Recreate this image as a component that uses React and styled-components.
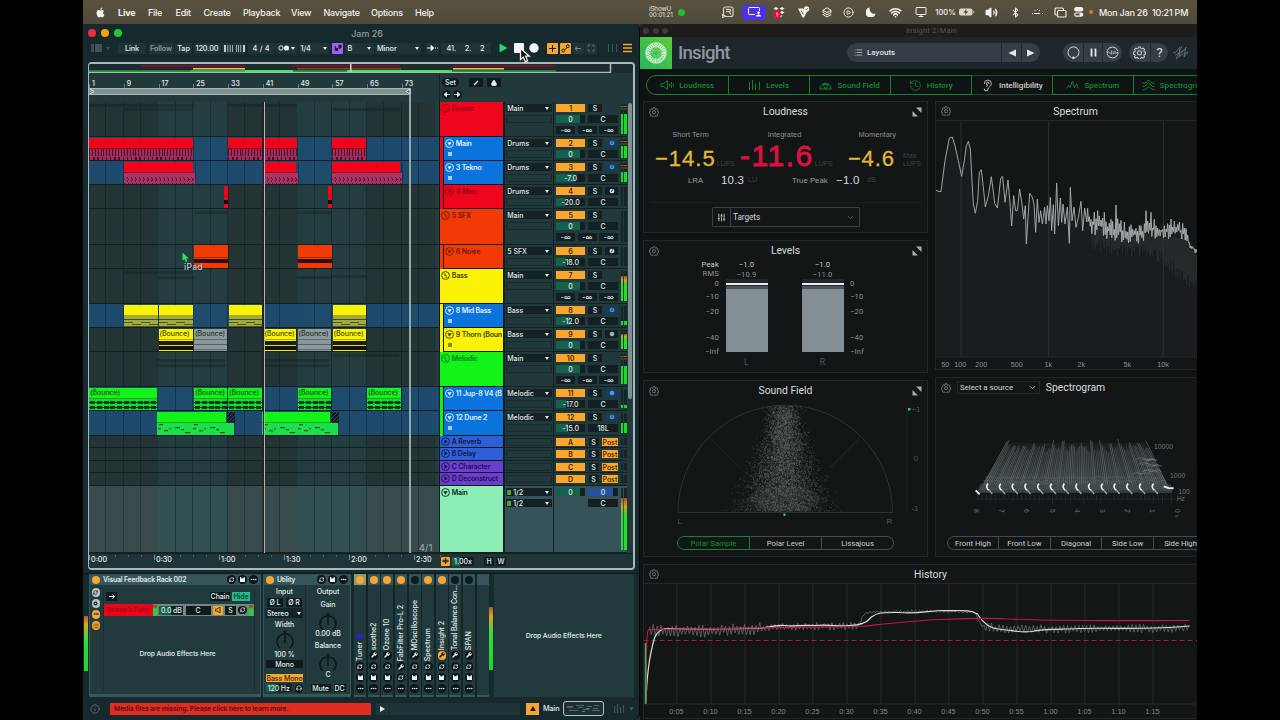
import React from "react";
import styled, { createGlobalStyle, css } from "styled-components";
import {
  Layers, CirclePlay, Wifi, Monitor, Volume2, Bluetooth, Copy, Ear,
  History as HistoryIcon, SlidersVertical, ChevronDown, List, Info, Lock,
  RefreshCw, Wrench, Scan, Ellipsis, Headphones,
} from "lucide-react";

const GlobalStyle = createGlobalStyle`
  * { box-sizing: border-box; }
  html, body { margin: 0; background: #000; overflow: hidden; }
  body { font-family: Inter, "Liberation Sans", sans-serif; width: 1280px; height: 720px; }
  svg { display: block; flex: none; }
`;

/* ---------- helpers ---------- */
const makeRandom = (seed) => {
  let s = seed;
  return () => {
    s = (s * 1664525 + 1013904223) % 4294967296;
    return s / 4294967296;
  };
};
const BAR = 34.75 / 8;

/* ---------- desktop ---------- */
const Desktop = styled.div`
  width: 1114px; height: 720px; margin-left: 83px; overflow: hidden;
  display: flex; flex-direction: column; background: #2b2b22;
`;
const MenuBar = styled.header`
  height: 24px; flex: none; display: flex; align-items: center; white-space: nowrap;
  background: linear-gradient(#58523f, #4f4b3a); color: #f4f2ea; padding-left: 12px;
`;
const MenuItem = styled.span`
  width: ${(p) => p.$w}px; margin-right: 13px; font-size: 9px; letter-spacing: ${(p) => (p.$bold ? "-.15px" : "-.25px")};
  font-weight: ${(p) => (p.$bold ? 700 : 500)};
`;
const AppleSlot = styled.span`width: 23px; display: flex;`;
const Recorder = styled.div`
  margin-left: 202px; width: 28px; font-size: 6.3px; line-height: 6px; letter-spacing: -.1px; color: #e6e3d8;
`;
const GreenDot = styled.i`width: 7px; height: 7px; border-radius: 50%; background: #1fbf2d; margin: 0 30px 0 1px;`;
const StatusSlot = styled.span`
  width: ${(p) => p.$w}px; display: flex; justify-content: center; align-items: center; font-size: 7.6px; font-weight: 500;
`;
const ShareBadge = styled.span`
  width: 24px; height: 15px; border-radius: 3px; background: #4b32e6; display: flex; align-items: center; justify-content: center;
`;
const ClockText = styled.span`margin-left: 6px; font-size: 9px; font-weight: 500; letter-spacing: -.22px;`;
const OrangeDot = styled.i`width: 4px; height: 4px; border-radius: 50%; background: #e07a1e; margin-left: 1px;`;
const Windows = styled.div`display: flex; height: 696px;`;

/* ---------- Live window ---------- */
const LiveWindow = styled.section`
  width: 557px; height: 696px; position: relative; background: #16292c; color: #e2ebea;
  border-radius: 6px 6px 7px 7px; border-right: 1px solid #06090a; font-weight: 500;
`;
const LiveTitle = styled.div`
  height: 17px; display: grid; grid-template-columns: 1fr auto 1fr; align-items: center; padding: 1px 0 0 5px;
  font-size: 8.9px; color: #93a0a0;
`;
const TitleText = styled.span`padding-left: ${(p) => p.$pl}px;`;
const Lights = styled.div`display: flex; gap: ${(p) => p.$gap}px;`;
const Light = styled.i`width: ${(p) => p.$s}px; height: ${(p) => p.$s}px; border-radius: 50%; background: ${(p) => p.$c};`;
const LiveToolbar = styled.div`height: 14px; display: flex; align-items: center; padding-left: 7px;`;
const ToolCell = styled.div`
  width: ${(p) => p.$w}px; height: 11px; margin-left: ${(p) => p.$ml || 1.5}px; padding: 0 ${(p) => p.$pad || 0}px;
  display: flex; align-items: center; justify-content: ${(p) => (p.$spread ? "space-between" : "center")};
  background: ${(p) => p.$bg || "#1f3438"}; color: ${(p) => p.$c || "#e4eceb"};
  font-size: 7.3px; letter-spacing: -.1px; border-radius: 1px; white-space: nowrap;
`;
const Transport = styled.span`margin-left: 6px;`;
const Caret = styled.i`
  width: 0; height: 0; border: 2px solid transparent; border-top: 3px solid currentColor; border-bottom: 0;
`;
const Frame = styled.div`
  margin: 7px 0 0 5px; width: 547px; height: 508px; border: 2px solid #a9b8ba; border-left-width: 1px;
  border-radius: 4px; overflow: hidden; background: #22393c; display: flex; flex-direction: column;
`;
const Overview = styled.div`height: 9px; flex: none; background: #1c2c2e;`;
const RulerRow = styled.div`height: 29px; flex: none; display: flex;`;
const Ruler = styled.div`width: 351px; display: flex; flex-direction: column; border-right: 1px solid #152527;`;
const RulerNumbers = styled.div`height: 15px; display: flex; padding-top: 6px;`;
const RulerNumber = styled.span`
  width: ${BAR * 8}px; flex: none; height: 9px; padding-left: 3px; font-size: 7px; line-height: 9px;
  background: linear-gradient(#6b7f80, #6b7f80) 0 100% / 1px 4px no-repeat;
`;
const LoopBrace = styled.div`
  width: 322px; height: 7px; background: #7f9391; display: flex; justify-content: space-between;
  border: 1px solid #a9b8b6; border-width: 1px 0;
`;
const RulerTools = styled.div`padding: 5px 0 0 2px; display: flex; flex-direction: column; gap: 3px;`;
const ToolLine = styled.div`display: flex; gap: ${(p) => p.$gap}px; align-items: center;`;
const RulerBtn = styled.span`
  width: ${(p) => p.$w}px; height: 9px; margin-right: ${(p) => p.$mr || 0}px; border-radius: ${(p) => (p.$round ? 5 : 1)}px;
  background: ${(p) => p.$bg || "#0f1c1f"}; display: flex; align-items: center; justify-content: center; font-size: 7px;
`;
const TrackArea = styled.div`height: 451px; flex: none; position: relative; display: flex;`;
const TrackList = styled.div`display: flex; flex-direction: column; width: 538px;`;
const TrackRow = styled.div`display: flex; height: ${(p) => p.$h}px; flex: none; background: ${(p) => (p.$main ? "#37535a" : "#22393c")};`;
const laneColor = { normal: "#233435", active: "#1e4a6d", main: "#374b4c" };
const Lane = styled.div`
  width: 351px; position: relative; border-bottom: 1px solid #142123;
  background:
    repeating-linear-gradient(90deg, transparent 0 16.4px, rgba(8,20,24,.38) 16.4px 17.375px),
    repeating-linear-gradient(90deg, transparent 0 69.5px, rgba(36,90,96,${(p) => (p.$kind === "active" ? 0.1 : 0.25)}) 69.5px 139px),
    ${(p) => laneColor[p.$kind]};
`;
const Ghost = styled.i`position: absolute; height: 3px; top: ${(p) => p.$y}px; background: rgba(12,26,28,.3);`;
const Head = styled.div`width: 65px; padding-left: 1px; display: flex; background: #10191b;`;
const Stripe = styled.i`width: 3px; background: ${(p) => p.$c}; margin-right: 1px;`;
const HeadBody = styled.div`
  flex: 1; margin: 0 1px 1px 0; min-width: 0; background: ${(p) => p.$c}; color: ${(p) => p.$fg}; padding: 1px 0 0 .5px;
  overflow: hidden;
`;
const HeadTitle = styled.div`
  display: flex; align-items: center; gap: 2px; font-size: 7px; line-height: 9px; height: ${(p) => (p.$small ? 9 : 10)}px;
  font-weight: 600; white-space: nowrap; letter-spacing: -.18px;
`;
const HeadMark = styled.i`display: block; width: 4px; height: 4px; margin: 4px 0 0 3px; background: ${(p) => p.$c};`;
const IOCol = styled.div`
  width: 50px; border-left: 1px solid #142123; border-right: 1px solid #142123; border-bottom: 1px solid #142123;
  padding: 2px 1px 0; display: flex; flex-direction: column; gap: 3px;
`;
const IOSelect = styled.div`
  height: 8px; background: #132225; display: flex; align-items: center; justify-content: space-between;
  padding: 0 3px 0 1px; font-size: 7px; white-space: nowrap;
`;
const IOName = styled.span`display: flex; align-items: center; gap: 2px;`;
const IOLevel = styled.i`width: 4px; height: 5px; background: linear-gradient(90deg, #3a9d3c, #7c9b3c);`;
const IOEmpty = styled.div`height: 8px; border: 1px solid #182b2e; background: #21383b;`;
const MixCol = styled.div`
  width: 65px; padding: 2px 0 0 2px; display: flex; flex-direction: column; gap: 3px; border-bottom: 1px solid #142123;
`;
const MixLine = styled.div`display: flex; gap: ${(p) => p.$gap || 3}px; height: 8px; justify-content: ${(p) => (p.$end ? "flex-end" : "flex-start")}; width: 62px;`;
const MixCell = styled.div`
  width: ${(p) => p.$w}px; height: 8px; display: flex; align-items: center; justify-content: center;
  background: ${(p) => p.$bg || "#122023"}; color: ${(p) => p.$c || "#e2ebea"}; font-size: 7px; font-weight: ${(p) => (p.$b ? 600 : 500)};
`;
const MeterCol = styled.div`width: 8px; display: flex; gap: 1px; padding: 2px 0 2px 2px; border-bottom: 1px solid #142123;`;
const MeterBar = styled.div`
  width: 2.5px; display: flex; flex-direction: column; justify-content: flex-end;
  background: ${(p) => (p.$peak ? "linear-gradient(#14262a 2px, #a5512a 2px 3px, #14262a 3px 4px, #5d2f22 4px 6px, #14262a 6px)" : "#14262a")};
`;
const MeterFill = styled.i`
  height: ${(p) => p.$v}%;
  background: ${(p) => (p.$hot ? "linear-gradient(#a8481c, #d8a024 15%, #2bdc2b 34%)" : "#18dc22")};
`;
const Scroll = styled.div`width: 4px; height: 296px; margin: 1px 0 0 1px; border-radius: 2px; background: #7c9092;`;
const Playhead = styled.i`position: absolute; left: 174px; top: 0; width: 2px; height: 451px; background: #b5b3ac; border-left: 1px solid #222;`;
const LoopEnd = styled.i`position: absolute; left: 320px; top: -8px; width: 2px; height: 459px; background: #94a5a6;`;
const Zoomed = styled.span`position: absolute; left: 330px; top: 440px; font-size: 9px; letter-spacing: .2px; color: #92a3a4;`;
const TimeRow = styled.div`height: 15px; flex: none; display: flex; border-top: 1px solid #142123; background: #1f3539;`;
const TimeRuler = styled.div`width: 352px; overflow: hidden; display: flex; padding-top: 1px;`;
const TimeMark = styled.span`
  width: 65px; flex: none; font-size: 7.2px; line-height: 10px; padding-left: 2px; height: 10px;
  background: linear-gradient(#7c9092, #7c9092) 0 0 / 1px 5px no-repeat,
    repeating-linear-gradient(90deg, #4c6466 0 1px, transparent 1px 13px) 0 0 / 100% 2px no-repeat;
`;
const ZoomTools = styled.div`display: flex; align-items: center; gap: 2px;`;

/* clips */
const clipBodies = {
  beat: css`background: repeating-linear-gradient(90deg, rgba(50,8,34,.75) 0 1px, transparent 1px 2.9px) 0 0 / 100% 7px no-repeat,
    repeating-linear-gradient(90deg, rgba(50,8,34,.8) 0 1.4px, transparent 1.4px 4.2px) 0 8px / 100% 4px no-repeat, #a12c58;`,
  tekno: css`background: repeating-linear-gradient(60deg, rgba(60,8,40,.6) 0 1px, transparent 1px 3.5px) 0 4px / 100% 3px no-repeat,
    repeating-linear-gradient(120deg, rgba(60,8,40,.6) 0 1px, transparent 1px 3.5px) 0 6px / 100% 3px no-repeat,
    repeating-linear-gradient(90deg, rgba(60,8,40,.8) 0 1px, transparent 1px 4px) 0 10px / 100% 2px no-repeat, #a93362;`,
  hit: css`background: linear-gradient(#f0061c 0 3px, #190a0a 3px 7px, #f0061c 7px);`,
  noise: css`background: linear-gradient(#f13a06 0 1px, #2d100a 1px 5px, #f13a06 5px);`,
  chords: css`background:
    linear-gradient(rgba(60,66,20,.9), rgba(60,66,20,.9)) 0 3px / 50% 1px repeat-x,
    repeating-linear-gradient(90deg, rgba(60,66,20,.8) 0 9px, transparent 9px 17px) 0 6px / 100% 1px no-repeat,
    repeating-linear-gradient(90deg, transparent 0 8px, rgba(60,66,20,.8) 8px 17px) 0 8px / 100% 1px no-repeat,
    linear-gradient(rgba(60,66,20,.8), rgba(60,66,20,.8)) 0 10px / 100% 1px no-repeat, #a0aa45;`,
  wave: css`background: linear-gradient(#f5ee0a 0 1px, #1c1c06 1px 5px, #e8e20a 5px 6px, #11120a 6px 10px, #f5ee0a 10px);`,
  muted: css`background: linear-gradient(#88989b 0 4px, #4f5f63 4px 5px, #8c9c9f 5px 9px, #5b6b6e 9px 10px, #8c9c9f 10px);`,
  pluck: css`background:
    repeating-linear-gradient(90deg, #063d12 0 5px, transparent 5px 6.8px) 1px 2px / 100% 3px no-repeat,
    repeating-linear-gradient(90deg, #063d12 0 5px, transparent 5px 6.8px) 1px 7px / 100% 3px no-repeat,
    linear-gradient(#063d12,#063d12) 0 3px / 100% 1px no-repeat, linear-gradient(#063d12,#063d12) 0 8px / 100% 1px no-repeat, #18d838;`,
  notes: css`background: #1cdf4c;`,
};
const Clip = styled.div`
  position: absolute; top: ${(p) => (p.$kind === "noise" ? 0 : 1)}px; bottom: 0; display: flex; flex-direction: column; overflow: hidden;
  border-right: 1px solid rgba(0,0,0,.25);
`;
const ClipHead = styled.div`
  height: ${(p) => p.$h}px; flex: none; background: ${(p) => p.$c}; color: rgba(20,26,6,.85); font-size: 7px; line-height: 10px;
  padding-left: 1px; white-space: nowrap; overflow: hidden; border-bottom: 1px solid rgba(0,0,0,.3); letter-spacing: -.05px;
  width: calc(100% - ${(p) => p.$tail || 0}px);
`;
const ClipBody = styled.div`flex: 1; ${(p) => clipBodies[p.$kind]}`;
const Hatch = styled.i`
  position: absolute; top: 1px; height: 11px; width: 8px;
  background: repeating-linear-gradient(135deg, #101c22 0 1.6px, #274c66 1.6px 2.8px);
`;
const noteShapes = [[2, 1, 4], [1, 5, 3], [7, 7, 4], [12, 5, 2], [18, 4, 5], [24, 6, 3], [28, 9, 5]];
const Notes = () => (
  <svg width="78" height="12">
    {[0, 35].map((o) => noteShapes.map(([x, y, w], i) => <rect key={o + "-" + i} x={x + o} y={y} width={w} height="1.2" fill="#07551b" />))}
  </svg>
);

const RED = "#f0061c", YEL = "#fbf306", GRN = "#12f31a", BLUE = "#0a74dc", ORG = "#f13a06";
const c = (kind, from, to, color, extra) => ({ kind, from, to, color, ...extra });
const tracks = [
  { h: 35, name: "Drums", col: RED, fg: "#8c0512", group: 1, io: "Main", n: 1, vol: "0", fill: 83, sends: 1, m: 68, ghosts: [[0, 105, 2], [35, 69, 6], [138, 70, 2], [244, 68, 6]] },
  { h: 24, name: "Main", col: BLUE, stripe: RED, fg: "#e7f1fb", blue: 1, io: "Drums", n: 2, vol: "0", fill: 83, arm: "b", m: 62, mark: 1,
    clips: [c("beat", 0, 104.5, RED), c("beat", 139, 174, RED), c("beat", 175, 208.5, RED), c("beat", 243.3, 278, RED)] },
  { h: 24, name: "3 Tekno", col: BLUE, stripe: RED, fg: "#e7f1fb", blue: 1, io: "Drums", n: 3, vol: "-7.0", fill: 65, arm: "b", m: 54, mark: 1,
    clips: [c("tekno", 35, 107, RED, { tail: 2 }), c("tekno", 175, 210, RED, { tail: 2 }), c("tekno", 243.3, 314.5, RED, { tail: 2 })] },
  { h: 24, name: "4 Misc", col: RED, stripe: RED, fg: "#8c0512", io: "Drums", n: 4, vol: "-20.0", fill: 30, arm: "w", m: 0,
    clips: [c("hit", 134.5, 140, RED), c("hit", 239, 244, RED)] },
  { h: 36, name: "5 SFX", col: ORG, fg: "#6b1d04", group: 1, io: "Main", n: 5, vol: "0", fill: 83, sends: 1, m: 0, ghosts: [[105, 34, 2], [208, 35, 2]] },
  { h: 24, name: "6 Noise", col: ORG, stripe: ORG, fg: "#6b1d04", io: "5 SFX", n: 6, vol: "-18.0", fill: 33, arm: "w", m: 0,
    clips: [c("noise", 105, 139.5, ORG), c("noise", 208.5, 243.5, ORG)] },
  { h: 35, name: "Bass", col: YEL, fg: "#3c3a02", group: 1, io: "Main", n: 7, vol: "0", fill: 83, sends: 1, m: 85, hot: 1, ghosts: [[35, 68, 2], [69, 36, 7], [208, 35, 7], [243, 35, 6]] },
  { h: 24, name: "8 Mid Bass", col: BLUE, stripe: YEL, fg: "#e7f1fb", blue: 1, io: "Bass", n: 8, vol: "-12.0", fill: 50, arm: "b", m: 20, mark: 1,
    clips: [c("chords", 35, 69.5, YEL), c("chords", 69.5, 105, YEL), c("chords", 139.5, 174, YEL), c("chords", 243.5, 278, YEL)] },
  { h: 24, name: "9 Thorn (Boun", col: YEL, stripe: YEL, fg: "#3c3a02", io: "Bass", n: 9, vol: "0", fill: 83, arm: "d", m: 80, hot: 1, mark: 1,
    clips: [c("wave", 69.5, 104.5, YEL, { t: "(Bounce)" }), c("muted", 105, 139, "#8b9b9e", { t: "(Bounce)" }), c("wave", 174.5, 208, YEL, { t: "(Bounce)" }), c("muted", 208.5, 243, "#8b9b9e", { t: "(Bounce)" }), c("wave", 243.5, 278, YEL, { t: "(Bounce)" })] },
  { h: 35, name: "Melodic", col: GRN, fg: "#0b7a12", group: 1, io: "Main", n: 10, vol: "0", fill: 83, sends: 1, m: 60, ghosts: [[67, 69, 7], [67, 69, 12], [174, 66, 7], [174, 66, 12], [244, 66, 2]] },
  { h: 24, name: "11 Jup-8 V4 (B", col: BLUE, stripe: GRN, fg: "#e7f1fb", blue: 1, io: "Melodic", n: 11, vol: "-17.0", fill: 35, arm: "bd", m: 14,
    clips: [c("pluck", 0, 69, GRN, { t: "(Bounce)" }), c("pluck", 105, 139, GRN, { t: "(Bounce)" }), c("pluck", 139, 174, GRN, { t: "(Bounce)" }), c("pluck", 208.5, 243, GRN, { t: "(Bounce)" }), c("pluck", 278, 312.5, GRN, { t: "(Bounce)" })] },
  { h: 25, name: "12 Dune 2", col: BLUE, stripe: GRN, fg: "#e7f1fb", blue: 1, io: "Melodic", n: 12, vol: "-15.0", fill: 42, arm: "b", pan: "18L", m: 48, mark: 1,
    clips: [c("notes", 68, 145.5, GRN, { tail: 8 }), c("notes", 172.5, 250, GRN, { tail: 8 })] },
  { h: 12, name: "A Reverb", col: "#2f5ed6", fg: "#0e1c4d", ret: "A" },
  { h: 13, name: "B Delay", col: "#2f5ed6", fg: "#0e1c4d", ret: "B" },
  { h: 12, name: "C Character", col: "#6a3fd0", fg: "#20104d", ret: "C" },
  { h: 13, name: "D Deconstruct", col: "#6a3fd0", fg: "#20104d", ret: "D" },
];

const HeadIcon = ({ type, color, size = 9 }) => (
  <svg width={size} height={size} viewBox="0 0 8 8" fill="none" stroke={color} strokeWidth=".8">
    <circle cx="4" cy="4" r="3.5" />
    {type === "group" && <path d="M2.300 2.800h1.800M3 4.200h2M4 5.600h1.600" />}
    {type === "child" && <path d="M2.100 2.900h3.800L4 5.900z" fill={color} stroke="none" />}
    {type === "ret" && <path d="M3 2v4L6 4z" fill={color} stroke="none" />}
  </svg>
);
const ArmGlyph = ({ kind }) => {
  const col = kind[0] === "b" ? "#4f9de0" : kind === "d" ? "#9fb0b0" : "#e8f0f0";
  return (
    <svg width="6" height="6" viewBox="0 0 6 6">
      <circle cx="3" cy="3" r="2.300" fill={col} />
      {(kind === "b" || kind === "w") && <path d="M3.200 1.200v2M2.200 3.600h1" stroke="#12242c" strokeWidth=".9" />}
    </svg>
  );
};
const Meter = ({ v, hot }) => (
  <MeterCol>
    <MeterBar $peak={v > 50 && !hot}><MeterFill $v={v} $hot={hot} /></MeterBar>
    <MeterBar $peak={v > 50 && !hot}><MeterFill $v={v} $hot={hot} /></MeterBar>
  </MeterCol>
);
const Track = ({ t }) => (
  <TrackRow $h={t.h}>
    <Lane $kind={t.blue ? "active" : "normal"}>
      {(t.ghosts || []).map(([x, w, y], i) => <Ghost key={i} $y={y} style={{ left: x, width: w }} />)}
      {(t.clips || []).map((k, i) => (
        <React.Fragment key={i}>
          <Clip $kind={k.kind} style={{ left: k.from, width: k.to - k.from }}>
            <ClipHead $c={k.color} $h={k.kind === "noise" ? 13 : 11} $tail={k.tail}>{k.t}</ClipHead>
            <ClipBody $kind={k.kind}>{k.kind === "notes" && <Notes />}</ClipBody>
          </Clip>
          {k.kind === "notes" && <Hatch style={{ left: k.to - 8 }} />}
        </React.Fragment>
      ))}
    </Lane>
    <Head>
      {t.stripe && <Stripe $c={t.stripe} />}
      <HeadBody $c={t.col} $fg={t.fg}>
        <HeadTitle $small={t.ret}>
          <HeadIcon type={t.ret ? "ret" : t.group ? "group" : "child"} color={t.fg} />{t.name}
        </HeadTitle>
        {t.mark && <HeadMark $c={t.blue ? "#a4cdf2" : "#8d8a10"} />}
      </HeadBody>
    </Head>
    <IOCol>
      {t.io && <IOSelect><span>{t.io}</span><Caret /></IOSelect>}
      <IOEmpty />
    </IOCol>
    <MixCol>
      <MixLine $gap={t.ret ? 3.5 : 3}>
        <MixCell $w={29} $bg="#fba62c" $c="#3b2606" $b>{t.ret || t.n}</MixCell>
        <MixCell $w={t.ret ? 10 : 14}>S</MixCell>
        {t.ret && <MixCell $w={15.500} $bg="#fba62c" $c="#3b2606">Post</MixCell>}
        {t.arm && <MixCell $w={13} $bg={t.arm[0] === "b" ? "#163d5e" : undefined}><ArmGlyph kind={t.arm} /></MixCell>}
      </MixLine>
      {t.vol && (
        <MixLine>
          <MixCell $w={29} $bg={`linear-gradient(90deg, #14614c ${t.fill}%, #122023 ${t.fill}%)`}>{t.vol}</MixCell>
          <MixCell $w={30}>{t.pan || "C"}</MixCell>
        </MixLine>
      )}
      {t.sends && <MixLine $gap={2.500}><MixCell $w={19}>-∞</MixCell><MixCell $w={19}>-∞</MixCell><MixCell $w={19}>-∞</MixCell></MixLine>}
    </MixCol>
    <Meter v={t.m || 0} hot={t.hot} />
  </TrackRow>
);

/* devices */
const DeviceRow = styled.div`height: 124px; margin: 3px 0 0 0; display: flex; padding-left: 1px; border-top: 1px solid #0c1719;`;
const SideMeter = styled.div`
  width: 4px; height: ${(p) => p.$h}px; margin: ${(p) => p.$top}px 1px 0 0;
  background: linear-gradient(#b5551d, #d9a52a 15%, #2be03a 45%, #22d432);
`;
const Device = styled.div`
  width: ${(p) => p.$w}px; height: 123px; margin-right: 2px; background: #213a3d; border-bottom: 3px solid #35565a; border-right: 1px solid #35565a; border-left: 1px solid #35565a;
  display: flex; flex-direction: column;
`;
const DeviceHead = styled.div`
  height: 11px; flex: none; background: #34555a; display: flex; align-items: center; gap: 2.5px; padding: 0 2px 0 1.5px;
  font-size: 6.9px; font-weight: 600; letter-spacing: -.2px; white-space: nowrap;
`;
const DeviceName = styled.span`padding-left: 1px;`;
const Spring = styled.i`flex: 1;`;
const Dot = styled.i`width: 8px; height: 8px; border-radius: 50%; background: ${(p) => (p.$on ? "#f6a733" : "#0e1b1e")}; flex: none;`;
const RoundIcon = styled.span`
  width: 8.6px; height: 8.6px; border-radius: 50%; background: ${(p) => p.$bg || "#0c1719"}; color: ${(p) => p.$c || "#e8f0f0"}; flex: none;
  display: flex; align-items: center; justify-content: center;
`;
const RackBody = styled.div`flex: 1; display: flex;`;
const RackRail = styled.div`width: 13px; padding: 3px 0 0 1.5px; display: flex; flex-direction: column; gap: 2.5px;`;
const RackMain = styled.div`width: 152px; border: 1px solid #1b3033; border-width: 0 1px; margin: 3px 0 3px; display: flex; flex-direction: column;`;
const RackTop = styled.div`height: 15px; padding: 2px 4px 0 2px; display: flex; align-items: center; gap: 2px;`;
const SmallBtn = styled.span`
  width: ${(p) => p.$w}px; height: ${(p) => p.$h || 9}px; background: ${(p) => p.$bg || "#0e1b1e"}; color: ${(p) => p.$c || "#e2ebea"};
  font-size: 7px; letter-spacing: -.1px; display: flex; align-items: center; justify-content: center; white-space: nowrap; flex: none;
`;
const ChainRow = styled.div`height: 12px; margin-top: 1px; background: #70887f; display: flex; align-items: center; gap: 2.2px;`;
const ChainName = styled.span`
  width: 49px; height: 12px; background: #e8061a; color: #9a0614; font-size: 6.6px; line-height: 12px; padding-left: 3px; white-space: nowrap; margin-right: -2px;
`;
const ChainMeter = styled.i`width: 4px; height: 11px; background: linear-gradient(#8d5a20 20%, #22d432 35%);`;
const DropText = styled.div`flex: 1; display: flex; align-items: center; justify-content: center; font-size: 6.8px; letter-spacing: -.1px; padding: 0 ${(p) => p.$pr || 0}px ${(p) => p.$pb || 0}px 0; white-space: nowrap;`;
const UtilBody = styled.div`flex: 1; display: flex; height: 109px;`;
const UtilCol = styled.div`
  width: ${(p) => p.$w}px; padding-top: 2px; display: flex; flex-direction: column; align-items: center; font-size: 7px; white-space: nowrap; letter-spacing: -.05px;
  border-right: ${(p) => (p.$line ? "1px solid #1a2f32" : 0)};
`;
const UtilLabel = styled.span`height: ${(p) => p.$h}px; line-height: ${(p) => p.$h}px; font-weight: ${(p) => (p.$b ? 600 : 500)};`;
const UtilLine = styled.div`display: flex; gap: 3px; align-items: center; margin-top: ${(p) => p.$mt || 0}px;`;
const Select = styled.span`width: 37px; height: 10px; padding: 0 2px 0 1px; margin-top: 1px; display: flex; align-items: center; justify-content: space-between; background: #132225;`;
const PluginStrips = styled.div`display: flex; gap: 1.65px; margin-left: 1px; background: #142529;`;
const Strip = styled.div`
  width: 12px; height: 123px; background: #213a3d; border-bottom: 2px solid #35565a; display: flex; flex-direction: column; align-items: center;
`;
const StripHead = styled.div`width: 100%; height: 11px; flex: none; background: ${(p) => (p.$sel ? "#8c9a70" : "#34555a")}; display: flex; align-items: center; justify-content: center;`;
const StripName = styled.div`
  flex: 1; min-height: 0; width: 12px; writing-mode: vertical-rl; transform: rotate(180deg); font-size: 7.1px; line-height: 12px;
  white-space: nowrap; margin-bottom: 1px; display: flex; align-items: center; gap: 2px; letter-spacing: ${(p) => (p.$tight ? "-.22px" : "0")};
`;
const BlueDot = styled.i`width: 6px; height: 6px; border-radius: 50%; background: #2a22c4;`;
const StripIcons = styled.div`display: flex; flex-direction: column; gap: 2.5px; padding-bottom: 2px;`;
const DropZone = styled.div`width: 140px; height: 123px; background: #213a3d; display: flex;`;
const StatusBar = styled.footer`height: 22px; display: flex; align-items: center; padding: 1px 0 0 7px; font-size: 7.3px; letter-spacing: -.1px;`;
const Warning = styled.div`
  width: 261px; height: 12px; margin: 0 5px 0 10px; background: #e02d21; color: #54100b; font-size: 6.8px; font-weight: 600; line-height: 12px; padding-left: 4px;
  border-radius: 1px; white-space: nowrap; letter-spacing: -.13px;
`;
const StatusBox = styled.div`width: ${(p) => p.$w}px; height: 12px; background: #1f3438; margin-right: ${(p) => p.$mr}px; display: flex; align-items: center; justify-content: center;`;
const UpBox = styled(StatusBox)`background: #f6a733;`;
const MiniMap = styled.div`width: 41px; height: 15px; border: 1.5px solid #b4c2c3; border-radius: 3px; margin: 0 10px 0 3px; background: #1c3033; padding: 2px;`;

const strips = [
  { n: "Tuner", on: 1, sel: 1, dot: 1, icons: "rsd" },
  { n: "soothe2", on: 1, icons: "wrsd" }, { n: "Ozone 10", on: 1, icons: "wrsd" },
  { n: "FabFilter Pro-L 2", on: 1, icons: "wrd" }, { n: "MOscilloscope", on: 0, icons: "wrsd" },
  { n: "Spectrum", on: 1, icons: "rsd" }, { n: "Insight 2", on: 1, icons: "wrsd", hot: 1 },
  { n: "Tonal Balance Con...", on: 0, icons: "wrsd", tight: 1 }, { n: "SPAN", on: 0, icons: "wrsd" },
];
const DiskGlyph = () => <svg width="5" height="5" viewBox="0 0 5 5"><path d="M0 0h4.300L5 .7V5H0z" fill="#eef3f3" /><path d="M1.200 0h2.400v1.300H1.200z" fill="#0c1719" /></svg>;
const SmallIcon = ({ k, hot }) => {
  if (k === "w") return <RoundIcon $bg={hot ? "#f6a733" : undefined} $c={hot ? "#1a1206" : undefined}><Wrench size={6} fill="currentColor" /></RoundIcon>;
  if (k === "r") return <RoundIcon><RefreshCw size={5.5} strokeWidth={3} /></RoundIcon>;
  if (k === "h") return <RoundIcon><Headphones size={6} strokeWidth={2.600} /></RoundIcon>;
  if (k === "s") return <RoundIcon><DiskGlyph /></RoundIcon>;
  return <RoundIcon><Ellipsis size={7} strokeWidth={3.200} /></RoundIcon>;
};
const KnobBox = styled.div`height: ${(p) => p.$h}px;`;
const Knob = ({ h = 19 }) => (
  <KnobBox $h={h}>
    <svg width="22" height="19" viewBox="0 0 22 19" fill="none">
      <path d="M6 17a8 8 0 1 1 10 0" stroke="#0c1719" strokeWidth="1.500" />
      <path d="M11 3v9" stroke="#0c1719" strokeWidth="1.500" /><path d="M9 0h4l-2 2.600z" fill="#0c1719" />
    </svg>
  </KnobBox>
);

const LiveApp = () => (
  <LiveWindow>
    <LiveTitle>
      <Lights $gap={5}><Light $s={8} $c="#f2293f" /><Light $s={8} $c="#f5a011" /><Light $s={8} $c="#1fca2c" /></Lights>
      <TitleText $pl={7}>Jam 26</TitleText><span />
    </LiveTitle>
    <LiveToolbar>
      <svg width="20" height="10"><rect x="1" y="1" width="3" height="8" fill="#3d5255" /><rect x="5" y="1" width="7" height="8" fill="#3d5255" /><path d="M16 4h4l-2 3z" fill="#3d5255" /></svg>
      <ToolCell $w={28} $ml={8}>Link</ToolCell>
      <ToolCell $w={25} $ml={2.500} $c="#95a5a6">Follow</ToolCell>
      <ToolCell $w={17}>Tap</ToolCell>
      <ToolCell $w={27}>120.00</ToolCell>
      <ToolCell $w={24}>
        <svg width="21" height="7" fill="#c3cfcf">
          <path d="M0 0h2v7H0zM3.500 0h.8v7h-.8zM5.800 0h.8v7h-.8zM8 0h.8v7H8zM12 0h.8v7H12zM14.200 0h.8v7h-.8zM16.400 0h.8v7h-.8zM19 0h2v7h-2z" />
        </svg>
      </ToolCell>
      <ToolCell $w={27} $spread $pad={5}><span>4</span><span>/</span><span>4</span></ToolCell>
      <ToolCell $w={21} $spread $pad={2}><svg width="12" height="6"><circle cx="3" cy="3" r="2.200" fill="none" stroke="#e4eceb" /><circle cx="8.500" cy="3" r="2.600" fill="#e4eceb" /></svg><Caret /></ToolCell>
      <ToolCell $w={30} $spread $pad={2}><span>1/4</span><Caret /></ToolCell>
      <ToolCell $w={11} $ml={3.500} $bg="#9a62f0">
        <svg width="8" height="8" fill="#1b1038"><path d="M4.500.8h3v3h-1v1h-2z" /><circle cx="2.600" cy="5.400" r="1.700" /><path d="M.8 2h1v3.500h-1z" /></svg>
      </ToolCell>
      <ToolCell $w={29} $spread $pad={3}><span>B</span><Caret /></ToolCell>
      <ToolCell $w={46} $spread $pad={2}><span>Minor</span><Caret /></ToolCell>
      <ToolCell $w={13} $ml={4.500}><svg width="11" height="6"><path d="M0 3h4M4 .5L7 3 4 5.500zM8 3h1M10 3h1" stroke="#e4eceb" fill="#e4eceb" /></svg></ToolCell>
      <ToolCell $w={50} $ml={2} $spread $pad={6}><span>41.</span><span>2.</span><span>2</span></ToolCell>
      <Transport>
        <svg width="50" height="12">
          <path d="M2.500 1.500v9l8-4.500z" fill="#1fd869" /><rect x="17" y="1" width="10" height="10" rx="1" fill="#f0f3f3" /><circle cx="37" cy="6" r="4.700" fill="#f5f7f7" />
        </svg>
      </Transport>
      <ToolCell $w={11} $ml={0.5} $bg="#f6a733"><svg width="9" height="9"><path d="M4.500 1v7M1 4.500h7" stroke="#22190a" /></svg></ToolCell>
      <ToolCell $w={11} $ml={2} $bg="#f6a733"><svg width="9" height="9" fill="none" stroke="#22190a"><circle cx="2.200" cy="6.500" r="1.400" /><circle cx="6.800" cy="2.200" r="1.400" /><path d="M3.500 5.500l2-1v-1" /></svg></ToolCell>
      <ToolCell $w={11}><svg width="8" height="7"><path d="M1 3.500h6M3.500 1.200L1 3.500l2.500 2.300" fill="none" stroke="#76898b" /></svg></ToolCell>
      <ToolCell $w={12}><Scan size={8} color="#8b9c9d" /></ToolCell>
      <svg width="37" height="10">
        <path d="M11.500 1v8M15.500 1v8M19.500 1v8" stroke="#3f5457" /><path d="M26 1.500h9M26 5h9M26 8.500h9" stroke="#f6a733" strokeWidth="1.400" />
      </svg>
    </LiveToolbar>
    <Frame>
      <Overview>
        <svg width="544" height="9">
          <rect x="0" y="6" width="467" height="2" fill="#13831f" /><rect x="101" y="6" width="100" height="2" fill="#2bb23a" />
          <rect x="156" y="6" width="48" height="2" fill="#3de84b" /><rect x="258" y="6" width="105" height="2" fill="#3de84b" />
          <rect x="52" y="1" width="104" height="2" fill="#7c0f2d" /><rect x="203" y="1" width="108" height="2" fill="#7c0f2d" /><rect x="364" y="1" width="103" height="2" fill="#7c0f2d" />
          <rect x="104" y="4" width="52" height="1.500" fill="#d9d04a" /><rect x="208" y="4" width="104" height="1.500" fill="#6d4a25" /><rect x="364" y="4" width="51" height="1.500" fill="#d9d04a" />
          <rect x="261" y="0" width="1.500" height="8" fill="#cfd8d8" />
          <path d="M0 8.500h521.500v-8.500" fill="none" stroke="#a9b8ba" strokeWidth="1.500" />
        </svg>
      </Overview>
      <RulerRow>
        <Ruler>
          <RulerNumbers>{[1, 9, 17, 25, 33, 41, 49, 57, 65, 73].map((n) => <RulerNumber key={n}>{n}</RulerNumber>)}</RulerNumbers>
          <LoopBrace>
            <svg width="6" height="6"><path d="M1 0l4 2.500L1 5" fill="none" stroke="#e8efef" /></svg>
            <svg width="6" height="6"><path d="M5 0L1 2.500 5 5z" fill="#4c6062" stroke="#e8efef" /></svg>
          </LoopBrace>
        </Ruler>
        <RulerTools>
          <ToolLine $gap={4}>
            <RulerBtn $w={17} $round $mr={6}>Set</RulerBtn>
            <RulerBtn $w={14}><svg width="6" height="6"><path d="M1 5l4-4" stroke="#e8efef" strokeWidth="1.300" /></svg></RulerBtn>
            <RulerBtn $w={14}><Lock size={6} strokeWidth={3} fill="#e8efef" /></RulerBtn>
          </ToolLine>
          <ToolLine $gap={1.500}>
            <RulerBtn $w={9} $round><svg width="6" height="5"><path d="M0 2.500L2.500.3v4.400zM2 2.500h4" fill="#e8efef" stroke="#e8efef" strokeWidth=".8" /></svg></RulerBtn>
            <RulerBtn $w={9} $round><svg width="6" height="5"><path d="M6 2.500L3.500.3v4.400zM4 2.500H0" fill="#e8efef" stroke="#e8efef" strokeWidth=".8" /></svg></RulerBtn>
          </ToolLine>
        </RulerTools>
      </RulerRow>
      <TrackArea>
        <TrackList>
          {tracks.map((t) => <Track key={t.name} t={t} />)}
          <TrackRow $h={67} $main>
            <Lane $kind="main" />
            <Head><HeadBody $c="#8ceeb6" $fg="#10251a"><HeadTitle><HeadIcon type="child" color="#10251a" />Main</HeadTitle></HeadBody></Head>
            <IOCol>
              {[0, 1].map((i) => <IOSelect key={i}><IOName><IOLevel />1/2</IOName><Caret /></IOSelect>)}
            </IOCol>
            <MixCol>
              <MixLine><MixCell $w={29} $bg="linear-gradient(90deg, #14614c 83%, #122023 83%)">0</MixCell><MixCell $w={30} $bg="linear-gradient(90deg, #28509c 83%, #122023 83%)">0</MixCell></MixLine>
              <MixLine $end><MixCell $w={30}>C</MixCell></MixLine>
            </MixCol>
            <Meter v={84} hot />
          </TrackRow>
        </TrackList>
        <Scroll />
        <Playhead />
        <LoopEnd />
        <Zoomed>4/1</Zoomed>
      </TrackArea>
      <TimeRow>
        <TimeRuler>{["0:00", "0:30", "1:00", "1:30", "2:00", "2:30"].map((n) => <TimeMark key={n}>{n}</TimeMark>)}</TimeRuler>
        <ZoomTools>
          <RulerBtn $w={9} $bg="#f6a733"><svg width="7" height="6"><path d="M0 3h7M2 1.500v3M3.500 0v6M5 1.500v3" stroke="#22190a" /></svg></RulerBtn>
          <RulerBtn $w={22} $mr={8} $bg="linear-gradient(90deg,#14614c 35%,#122023 35%)">1.00x</RulerBtn>
          <RulerBtn $w={10}>H</RulerBtn><RulerBtn $w={10}>W</RulerBtn>
        </ZoomTools>
      </TimeRow>
    </Frame>
    <DeviceRow>
      <SideMeter $h={55} $top={42} />
      <Device $w={172}>
        <DeviceHead><Dot $on /><DeviceName>Visual Feedback Rack 002</DeviceName><Spring /><SmallIcon k="r" /><SmallIcon k="s" /><SmallIcon k="d" /></DeviceHead>
        <RackBody>
          <RackRail>
            <RoundIcon $bg="#b7c5c5" $c="#16292c"><RefreshCw size={5} strokeWidth={3} /></RoundIcon>
            <RoundIcon $bg="#b7c5c5"><svg width="5" height="5"><circle cx="2.500" cy="2.500" r="2" fill="#16292c" /><circle cx="2.500" cy="2.500" r=".8" fill="#b7c5c5" /></svg></RoundIcon>
            <RoundIcon $bg="#f6a733" $c="#16292c"><Ellipsis size={6} strokeWidth={4} /></RoundIcon>
            <RoundIcon $bg="#f6a733" $c="#6b4308"><List size={6} strokeWidth={3} /></RoundIcon>
          </RackRail>
          <RackMain>
            <RackTop>
              <SmallBtn $w={11}><svg width="6" height="5"><path d="M0 2.500h6M3.500.5l2 2-2 2" stroke="#e8efef" fill="none" /></svg></SmallBtn>
              <Spring /><SmallBtn $w={20}>Chain</SmallBtn><SmallBtn $w={18} $bg="#25b98c" $c="#0b3b2f">Hide</SmallBtn>
            </RackTop>
            <ChainRow>
              <ChainName>Bence's Funk</ChainName><ChainMeter />
              <SmallBtn $w={24} $bg="linear-gradient(90deg,#14614c 50%,#122023 50%)">0.0 dB</SmallBtn>
              <SmallBtn $w={25}>C</SmallBtn>
              <SmallBtn $w={10} $bg="#f6a733"><svg width="6" height="6"><path d="M0 2h2l3-2v6L2 4H0z" fill="none" stroke="#22190a" strokeWidth=".8" /></svg></SmallBtn>
              <SmallBtn $w={11}>S</SmallBtn><SmallIcon k="r" /><ChainMeter />
            </ChainRow>
            <DropText $pb={0} $pr={3}>Drop Audio Effects Here</DropText>
          </RackMain>
        </RackBody>
      </Device>
      <Device $w={88}>
        <DeviceHead><Dot $on /><DeviceName>Utility</DeviceName><Spring /><SmallIcon k="r" /><SmallIcon k="s" /><SmallIcon k="d" /></DeviceHead>
        <UtilBody>
          <UtilCol $w={42} $line>
            <UtilLabel $h={10}>Input</UtilLabel>
            <UtilLine $mt={1}><SmallBtn $w={16}>Ø L</SmallBtn><SmallBtn $w={16}>Ø R</SmallBtn></UtilLine>
            <Select>Stereo<Caret /></Select>
            <UtilLabel $h={13}>Width</UtilLabel>
            <Knob />
            <UtilLabel $h={9}>100 %</UtilLabel>
            <UtilLine $mt={1}><SmallBtn $w={37} $h={8}>Mono</SmallBtn></UtilLine>
            <UtilLine $mt={6}><SmallBtn $w={37} $h={8} $bg="#f6a733" $c="#3b2606">Bass Mono</SmallBtn></UtilLine>
            <UtilLine $mt={2}><SmallBtn $w={26} $h={8} $bg="linear-gradient(90deg,#14614c 40%,#122023 40%)">120 Hz</SmallBtn><SmallIcon k="h" /></UtilLine>
          </UtilCol>
          <UtilCol $w={44}>
            <UtilLabel $h={10}>Output</UtilLabel>
            <UtilLabel $h={16}>Gain</UtilLabel>
            <Knob h={16} />
            <UtilLabel $h={9}>0.00 dB</UtilLabel>
            <UtilLabel $h={16}>Balance</UtilLabel>
            <Knob h={16} />
            <UtilLabel $h={9}>C</UtilLabel>
            <UtilLine $mt={5}><SmallBtn $w={20} $h={8}>Mute</SmallBtn><SmallBtn $w={12} $h={8}>DC</SmallBtn></UtilLine>
          </UtilCol>
        </UtilBody>
      </Device>
      <PluginStrips>
        {strips.map((s) => (
          <Strip key={s.n}>
            <StripHead $sel={s.sel}><Dot $on={s.on} /></StripHead>
            <StripName $tight={s.tight}>{s.n}{s.dot && <BlueDot />}</StripName>
            <StripIcons>{s.icons.split("").map((k) => <SmallIcon key={k} k={k} hot={s.hot} />)}</StripIcons>
          </Strip>
        ))}
        <Strip><StripHead /></Strip>
      </PluginStrips>
      <SideMeter $h={63} $top={33} />
      <DropZone><DropText>Drop Audio Effects Here</DropText></DropZone>
    </DeviceRow>
    <StatusBar>
      <Info size={10} color="#5f7476" />
      <Warning>Media files are missing. Please click here to learn more.</Warning>
      <StatusBox $w={13} $mr={1}><svg width="5" height="6"><path d="M0 0v6l5-3z" fill="#e8efef" /></svg></StatusBox>
      <StatusBox $w={130} $mr={6} />
      <UpBox $w={13} $mr={4}><svg width="6" height="5"><path d="M0 5h6L3 0z" fill="#22190a" /></svg></UpBox>
      <span>Main</span>
      <MiniMap>
        <svg width="34" height="9">
          <path d="M1 2h6v1.500H1zM10 1h8v1h-8zM21 2h5v1h-5zM28 1h5v1h-5zM3 6h9v1H3zM17 5h6v1h-6zM26 6h8v1h-8zM20 4h4v1h-4zM27 4h5v1h-5zM12 3h5v1h-5z" fill="#47686a" /><path d="M1 3h5v1H1z" fill="#c02030" /><path d="M16 7h3v1h-3z" fill="#2aa040" />
        </svg>
      </MiniMap>
      <svg width="22" height="9"><path d="M.5 2v7M3.500 0v9M6.500 3v6M9.500 1v8" stroke="#3f5457" strokeWidth="1.300" /><path d="M15 3h5l-2.500 3.500z" fill="#3f5457" /></svg>
    </StatusBar>
    <PointerArt />
  </LiveWindow>
);
const Overlay = styled.div`position: absolute; left: ${(p) => p.$x}px; top: ${(p) => p.$y}px; font-size: 8.5px; letter-spacing: .3px; color: #cfd8d6; text-shadow: 0 0 1px #000;`;
const PointerArt = () => (
  <>
    <Overlay $x={436} $y={23}>
      <svg width="13" height="18" viewBox="0 0 13 18"><path d="M1.500 1.500v11l2.800-2.400 2 4.700 2.300-1-2-4.600h3.700z" fill="#0a0a0a" stroke="#f4f4f4" strokeWidth="1.300" /></svg>
    </Overlay>
    <Overlay $x={99} $y={228}>
      <svg width="8" height="11" viewBox="0 0 8 11"><path d="M.5.5v8l2-1.500 1.500 3 1.500-.7-1.300-2.800h2.500z" fill="#2bea4b" /></svg>
    </Overlay>
    <Overlay $x={101} $y={238}>iPad</Overlay>
  </>
);

/* ---------- Insight window ---------- */
const GREEN = "#12842c";
const InsightWindow = styled.section`
  width: 557px; height: 696px; background: #0f1314; display: flex; flex-direction: column; overflow: hidden; color: #d3d7d8;
  font-family: Roboto, "Liberation Sans", sans-serif; border-radius: 6px 0 0 0;
`;
const InsightTitle = styled.div`
  height: 13px; flex: none; background: #1e1d1c; display: grid; grid-template-columns: 1fr auto 1fr; align-items: center;
  padding: 0 0 0 3px; font-size: 7.5px; color: #55544f; letter-spacing: .2px;
`;
const InsightHead = styled.div`height: 32px; flex: none; background: #1e262b; display: flex; align-items: center; padding-bottom: 1px;`;
const Logo = styled.div`width: 32px; height: 32px; background: linear-gradient(45deg, #21b85a, #5ecb3c); display: flex; align-items: center; justify-content: center;`;
const Brand = styled.span`margin-left: 6px; width: 169px; font-size: 18.6px; font-weight: 500; color: #8c979f; letter-spacing: -.75px;`;
const Pill = styled.div`
  height: 19px; display: flex; border-radius: 10px; background: #353e46; overflow: hidden; margin-right: ${(p) => p.$mr}px;
`;
const PillPart = styled.span`
  width: ${(p) => p.$w}px; display: flex; align-items: center; justify-content: ${(p) => (p.$start ? "flex-start" : "center")};
  gap: 4px; padding-left: ${(p) => (p.$start ? 7 : 0)}px; font-size: ${(p) => p.$fs || 8}px; font-weight: ${(p) => (p.$start ? 500 : 400)};
  color: #dde1e3; border-left: ${(p) => (p.$line ? "1px solid #232b31" : 0)};
`;
const Tabs = styled.nav`height: 32px; flex: none; padding: 6px 0 0 6px; display: flex; width: 700px;`;
const Tab = styled.div`
  width: ${(p) => (p.$first ? 82.5 : 81.1)}px; height: 20px; border: 1px solid ${GREEN}; border-left-width: ${(p) => (p.$first ? 1 : 0)}px; display: flex; align-items: center; justify-content: center; gap: 5px;
  font-size: 8.1px; font-weight: 500; letter-spacing: -.02px; color: ${(p) => (p.$off ? "#c9cdce" : "#138c2d")}; border-radius: ${(p) => (p.$first ? "10px 0 0 10px" : 0)}; white-space: nowrap;
  border-top-color: ${(p) => (p.$off ? "#154f24" : GREEN)}; border-bottom-color: ${(p) => (p.$off ? "#154f24" : GREEN)};
`;
const Panels = styled.div`display: flex; gap: 7px; padding-left: 3px; height: 456px; flex: none;`;
const Column = styled.div`width: ${(p) => p.$w}px; flex: none; display: flex; flex-direction: column; gap: 7px;`;
const Panel = styled.section`height: ${(p) => p.$h}px; flex: none; background: #121617; border: 1px solid #1f2729; display: flex; flex-direction: column; overflow: hidden;`;
const HistoryPanel = styled(Panel)`margin: 7px 0 0 3px; width: 575px;`;
const PanelHead = styled.div`height: 19px; flex: none; display: grid; grid-template-columns: 1fr auto 1fr; align-items: center; padding: 0 5px; border-bottom: ${(p) => (p.$line ? "1px solid #1f2729" : 0)};`;
const PanelTitle = styled.h2`margin: 0; font-size: 10.4px; font-weight: 400; color: #d9dcdd; letter-spacing: -.03px;`;
const EndSlot = styled.span`display: flex; justify-content: flex-end;`;
const StartSlot = styled.span`display: flex; align-items: center; gap: 6px; white-space: nowrap;`;
const num = css`font-family: "Liberation Sans", Arial, sans-serif;`;
const Readouts = styled.div`display: flex; padding: 9px 0 0 11px; ${num}`;
const Readout = styled.div`width: ${(p) => p.$w}px; display: flex; flex-direction: column;`;
const ReadLabel = styled.span`width: ${(p) => p.$w}px; text-align: center; font-size: 7.5px; color: #8b9092; height: 10px; line-height: 10px; white-space: nowrap;`;
const ReadValue = styled.div`display: flex; align-items: flex-end; height: 32px; padding-bottom: 4px; gap: 1px; white-space: nowrap;`;
const Big = styled.span`
  font-size: ${(p) => p.$s}px; line-height: .8; color: ${(p) => p.$c}; letter-spacing: ${(p) => p.$ls}px; -webkit-text-stroke: ${(p) => (p.$bold ? ".9px #d8123e" : ".3px #e3b73c")};
`;
const Unit = styled.span`width: ${(p) => (p.$w ? p.$w + "px" : "auto")}; font-size: 7.1px; line-height: 8px; color: #3d4345; white-space: pre; margin-left: ${(p) => p.$ml || 0}px;`;
const SubRead = styled.div`display: flex; align-items: center; height: 16px; padding-left: 44px; ${num}`;
const SubLabel = styled.span`font-size: 7.8px; color: #9a9fa0; width: ${(p) => p.$w}px; white-space: nowrap;`;
const SubValue = styled.span`font-size: 11.5px; color: #d9dcdd; width: ${(p) => p.$w}px; letter-spacing: .2px; white-space: nowrap;`;
const TargetRow = styled.div`margin: 14px 6px 0; border-top: 1px solid #1b2123; padding: 4px 0 0 62px;`;
const Targets = styled.div`
  width: 148px; height: 20px; border: 1px solid #3a4143; display: flex; align-items: center; font-size: 8.2px; border-radius: 1px;
`;
const TargetIcon = styled.span`width: 18px; height: 18px; border-right: 1px solid #3a4143; display: flex; align-items: center; justify-content: center;`;
const TargetText = styled.span`flex: 1; padding-left: 2px; letter-spacing: -.05px;`;
const TargetCaret = styled.span`width: 13px;`;

const LevelBody = styled.div`display: flex; padding-left: 48px; margin-top: -1px;`;
const ScaleCol = styled.div`
  width: ${(p) => p.$w}px; display: flex; flex-direction: column; text-align: ${(p) => p.$a}; font-size: 7.6px; color: #8b9092; white-space: nowrap;
  padding-${(p) => p.$a}: 7px; letter-spacing: .2px;
`;
const ScaleItem = styled.span`height: ${(p) => p.$h}px; line-height: ${(p) => p.$h}px; margin-top: ${(p) => p.$mt || 0}px; color: ${(p) => p.$c || "inherit"}; font-size: ${(p) => p.$fs || 7.6}px;`;
const BarCol = styled.div`width: 41px; margin-right: ${(p) => p.$mr}px; display: flex; flex-direction: column; align-items: center; letter-spacing: .2px;`;
const LevelBar = styled.div`
  width: 42px; height: 73px; background: linear-gradient(#202628 0 4px, #e9eced 4px 5.5px, #23292c 5.5px 7px, #4b545a 7px 10px, #848e95 10px);
`;

const Segments = styled.div`display: flex; height: 14px; margin-left: ${(p) => p.$ml}px; flex: none;`;
const Segment = styled.span`
  width: ${(p) => p.$w}px; flex: none; height: 14px; border: 1px solid ${(p) => (p.$on ? GREEN : "#454c4e")}; border-left-width: ${(p) => (p.$first ? 1 : 0)}px;
  border-radius: ${(p) => (p.$first ? "7px 0 0 7px" : p.$last ? "0 7px 7px 0" : 0)};
  display: flex; align-items: center; justify-content: center; font-size: 7.8px; letter-spacing: -.03px; color: ${(p) => (p.$on ? "#14922f" : "#c9cdce")}; white-space: nowrap;
`;
const SourceSelect = styled.span`
  width: 83px; height: 13px; border: 1px solid #1f2729; padding: 0 2px; display: flex; align-items: center; justify-content: space-between; font-size: 7.8px;
`;
const Gear = ({ size = 10, color = "#7f8688" }) => (
  <svg width={size} height={size} viewBox="0 0 20 20" fill="none" stroke={color} strokeWidth="1.600">
    <path d="M8.500 1.500h3l.6 2.200 1.600.7 2-1.100 2.100 2.100-1.200 2 .7 1.500 2.200.6v3l-2.200.6-.7 1.600 1.200 2-2.100 2-2-1.100-1.600.7-.6 2.200h-3l-.6-2.200-1.600-.7-2 1.100-2.100-2 1.200-2-.7-1.600L.5 12.500v-3l2.200-.6.7-1.500-1.200-2 2.100-2.100 2 1.100 1.600-.7z" /><circle cx="10" cy="10.500" r="3.200" />
  </svg>
);
const Expand = () => <svg width="10" height="10"><path d="M4 .5h5.500v5.500zM.5 4v5.500h5.500z" fill="#a9aeaf" /></svg>;

const fieldDots = (() => {
  const r = makeRandom(77);
  const groups = ["", "", ""];
  for (let i = 0; i < 9000; i++) {
    const t = Math.pow(r(), 0.8);
    const y = 405.5 + t * 106;
    const spread = t < 0.1 ? 15 - t * 40 : 10 + 24 * Math.pow(t, 1.3);
    const g = (r() + r() + r() - 1.5) * 1.35;
    const x = 784.5 + g * spread - (t > 0.6 ? 2 : 0);
    const dy = 512.5 - y, dx = x - 785;
    if (dx * dx + dy * dy > 107 * 107) continue;
    groups[i % 3] += `M${x.toFixed(1)} ${y.toFixed(1)}h.8`;
  }
  return groups;
})();
const SoundFieldArt = () => (
  <svg width="282" height="136" viewBox="644.500 400 282 136" fontSize="7.800" fill="#50575a" fontFamily="Liberation Sans, sans-serif">
    <path d="M678.500 512.500a107 107 0 0 1 214.500 0z" fill="none" stroke="#2b3234" />
    <path d="M711 438l30 30M860 438l-30 30" stroke="#20272a" fill="none" />
    <ellipse cx="785" cy="499" rx="36" ry="13" fill="#8a8f91" opacity=".1" />
    {fieldDots.map((d, i) => <path key={i} d={d} stroke={["#474c4e", "#6b7072", "#94989a"][i]} strokeWidth=".65" opacity={[0.6, 0.5, 0.5][i]} />)}
    <rect x="784" y="513.500" width="2" height="2.500" fill="#2fc4a0" />
    <text x="678" y="524">L</text><text x="887" y="524">R</text>
    <path d="M907.500 408v103" stroke="#1f2729" /><rect x="908.500" y="408" width="2.500" height="2.500" fill="#2fc4a0" />
    <text x="912" y="412">+1</text><text x="914" y="461">0</text><text x="912" y="511">-1</text>
  </svg>
);

const spectrumPoints = (() => {
  const pts = [[30, 357], [40, 362], [48, 363], [60, 270], [73, 202], [82, 199], [90, 225], [100, 270], [110, 317], [118, 270], [124, 225], [130, 212], [136, 235], [141, 330], [145, 400], [151, 428], [158, 390], [163, 305], [169, 297], [175, 350], [181, 409], [190, 375], [199, 318], [206, 370], [209, 398], [217, 412], [222, 370], [227, 322], [233, 317], [240, 395], [249, 328], [256, 410], [260, 466], [266, 375], [272, 420], [277, 420], [284, 355], [291, 400], [296, 445], [301, 405], [304, 520], [309, 440], [314, 368], [322, 380], [327, 400], [332, 485], [337, 385], [342, 455], [347, 420], [352, 460], [359, 410], [363, 460], [367, 405], [372, 450], [376, 380], [380, 480], [385, 402], [389, 490], [395, 337], [400, 465], [406, 382], [410, 455], [414, 400], [420, 460], [427, 410], [433, 518], [436, 350], [441, 450], [447, 410], [453, 470], [460, 440], [468, 392], [473, 480], [479, 412]];
  const mids = [[480, 448], [520, 462], [560, 475], [610, 488], [650, 490], [675, 470], [720, 485], [745, 475], [775, 482], [795, 525], [816, 543]];
  const mid = (x) => {
    const i = Math.max(1, mids.findIndex((m) => m[0] >= x));
    const [a, b] = [mids[i - 1], mids[i]];
    return a[1] + ((b[1] - a[1]) * (x - a[0])) / (b[0] - a[0]);
  };
  const r = makeRandom(9);
  let s = 1;
  const peaks = { 518: 420, 538: 425, 573: 403, 663: 420, 678: 425, 738: 445 };
  for (let x = 483; x < 816; x += 2.5) {
    s = -s;
    const amp = x > 790 ? 9 : x < 600 ? 38 : 29;
    pts.push([x, peaks[x] || mid(x) + s * r() * amp]);
  }
  return pts.map((p) => p[0] + "," + p[1].toFixed(0)).join(" ");
})();
const spectrumShade = (() => {
  const r = makeRandom(5);
  let d = "";
  for (let x = 500; x < 816; x += 3) {
    const top = 470 + (x - 500) * 0.12 + (x > 780 ? (x - 780) * 1.2 : 0);
    d += `M${x} ${top.toFixed(0)}V${(500 + (x - 500) * 0.16 + (x > 700 ? (x - 700) * 0.7 : 0) + r() * 42).toFixed(0)}`;
  }
  return d;
})();
const SpectrumArt = () => (
  <svg width="262" height="249" viewBox="33 151 786 747" fontSize="21.500" fill="#8b9092" fontFamily="Liberation Sans, sans-serif" textAnchor="middle">
    <polygon points={`30,858 ${spectrumPoints} 820,545 820,858`} fill="#191d1f" />
    <path d={spectrumShade} stroke="#34393b" strokeWidth="3" opacity=".5" />
    <path d="M108 150V858M371 150V858M715 150V858" stroke="#2b3133" strokeWidth="3" />
    <path d="M30 859H820" stroke="#22292b" strokeWidth="3" />
    <polyline points={spectrumPoints} fill="none" stroke="#a9aeb0" strokeWidth="2.800" strokeLinejoin="round" />
    {[["50", 61], ["100", 106], ["200", 169], ["500", 275], ["1k", 370], ["2k", 469], ["5k", 607], ["10k", 714]].map(([t, x]) => <text key={t} x={x} y="888">{t}</text>)}
  </svg>
);

const gramLines = (() => {
  const r = makeRandom(31);
  const out = [];
  for (let i = 0; i <= 90; i++) {
    const t = i / 90;
    const peak = i % 6 < 2;
    const k = (peak ? 1104 : 1122) + r() * 22;
    const f = (k - 1104) / 158;
    const tx = 250 + t * 410, bx = 165 + t * 570;
    out.push({ x1: tx + (bx - tx) * f, y1: k, x2: bx, y2: 1262, o: peak ? 0.5 : 0.2 + r() * 0.25 });
  }
  return out;
})();
const SpectrogramArt = () => {
  const r = makeRandom(12);
  return (
    <svg width="262" height="139" viewBox="33 978 786 417" fontSize="20.500" fill="#6d7476" fontFamily="Liberation Sans, sans-serif">
      <defs>
        <linearGradient id="gram" x1="0" y1="0" x2="0" y2="1"><stop offset="0" stopColor="#767f83" stopOpacity=".08" /><stop offset="1" stopColor="#767f83" stopOpacity=".45" /></linearGradient>
      </defs>
      <polygon points="245,1115 660,1115 738,1258 162,1258" fill="url(#gram)" />
      {gramLines.map((l, i) => <line key={i} x1={l.x1} y1={l.y1} x2={l.x2} y2={l.y2} stroke="#9aa2a6" strokeWidth="2.200" opacity={l.o} />)}
      {[0, 1, 2].map((k) => (
        <polyline key={k} fill="none" stroke="#5f676b" strokeWidth="2.500" opacity=".7"
          points={Array.from({ length: 90 }, (_, i) => `${180 - k * 5 + i * (6.05 + k * 0.12)},${(1216 + k * 11 + r() * 8).toFixed(0)}`).join(" ")} />
      ))}
      {Array.from({ length: 16 }, (_, i) => <path key={i} d={`M${620 + r() * 60} ${1165 + r() * 50}l16-5 14 4`} fill="none" stroke="#8a9296" strokeWidth="2" opacity=".6" />)}
      <path d="M165 1240h572l6 26H156z" fill="#3d4549" opacity=".75" />
      {Array.from({ length: 14 }, (_, i) => {
        const x = 189 + i * 38.2;
        return (
          <g key={i} fill="none">
            <path d={`M${x} 1238q-9 10 3 20`} stroke="#eef1f2" strokeWidth="5" />
            <path d={`M${x + 3} 1257l10 12`} stroke="#9aa1a4" strokeWidth="4" />
          </g>
        );
      })}
      <path d="M152 1258l12 12M716 1246l14 5 16 1" stroke="#e4e8ea" strokeWidth="6" fill="none" />
      {Array.from({ length: 45 }, (_, i) => <path key={i} d={`M${158 + i * 13.2} 1270v${6 + r() * 24}`} stroke="#4a5154" strokeWidth="2" opacity=".45" />)}
      <path d="M152 1284h600" stroke="#2a3032" strokeWidth="2" />
      <text x="687" y="1133">10000</text><text x="735" y="1220">1000</text><text x="760" y="1269">100</text><text x="755" y="1290">Hz</text>
      {[8, 7, 6, 5, 4, 3, 2, 1, 0].map((n, i) => <text key={n} transform={`translate(${147 + i * 75.500} 1314) rotate(90)`} fontSize="20">{n}</text>)}
      <text transform="translate(751 1331) rotate(90)" fontSize="17">s</text>
    </svg>
  );
};

const shortTerm = (() => {
  const r = makeRandom(3);
  const base = [[650, 630], [700, 631], [760, 629], [770, 627], [860, 626], [864, 614], [870, 612], [940, 611], [975, 612], [982, 626], [1000, 629], [1060, 629], [1190, 628]];
  const mid = (x) => {
    const i = Math.max(1, base.findIndex((m) => m[0] >= x));
    const [a, b] = [base[i - 1], base[i]];
    return a[1] + ((b[1] - a[1]) * (x - a[0])) / (b[0] - a[0]);
  };
  const out = [];
  let s = 1;
  for (let x = 650; x <= 1190; x += 1.9) {
    s = -s;
    const amp = x < 762 ? 6.5 : x < 860 ? 4 : x < 985 ? 1.5 : 4.5;
    out.push(`${x.toFixed(1)},${(mid(x) + s * amp * (0.35 + 0.65 * r())).toFixed(1)}`);
  }
  return out.join(" ");
})();
const times = ["0:05", "0:10", "0:15", "0:20", "0:25", "0:30", "0:35", "0:40", "0:45", "0:50", "0:55", "1:00", "1:05", "1:10", "1:15"];
const HistoryArt = () => (
  <svg width="557" height="135" viewBox="644.500 584 557 135" fontSize="7.500" fill="#7f8587" fontFamily="Liberation Sans, sans-serif" textAnchor="middle">
    {times.map((t, i) => <path key={t} d={`M${677.5 + i * 34} 584v120`} stroke="#22292b" />)}
    <path d="M644 704h560" stroke="#22292b" />
    <polyline points={shortTerm} fill="none" stroke="#5d6365" strokeWidth=".9" />
    <path d="M644 640.500h560" stroke="#b3133a" strokeWidth="1.100" strokeDasharray="5 3" />
    <path d="M646.500 703C647 680 650 655 655 638C658 631 662 628.500 668 628.500C700 630 730 628 760 628.500C770 627 775 625 785 625.500C795 627 800 624.500 815 625.500C830 624 840 627 850 625.500C860 625 866 624 872 617C878 612 885 612.500 900 612.500C920 614 930 610.500 945 610.500C960 611 970 609 978 614C984 624 992 629 1002 629.500C1012 630 1020 633 1032 631.500C1045 628.500 1060 629.500 1080 628.500C1110 627.500 1150 630 1190 626" fill="none" stroke="#d9dcdd" strokeWidth="1.200" />
    <path d="M646.500 704C647 670 646 632 649 629.500C700 628.500 760 628.500 862 626.500C890 623.500 910 621 940 619.500C965 618.500 990 617.500 1010 619C1050 620.500 1120 621 1190 620.500" fill="none" stroke="#c9134a" strokeWidth="1.200" />
    <path d="M646 704V643" stroke="#3fae62" strokeWidth="1.500" />
    {times.map((t, i) => <text key={t} x={677 + i * 34} y="713.500">{t}</text>)}
  </svg>
);

const SpeakerIcon = () => <svg width="14" height="10" fill="none" stroke="currentColor" strokeWidth=".9"><path d="M1 3.500h2.500L7.500.8v8.400L3.500 6.500H1zM9.500 3.500v3M11.500 2v6M13.300 3.500v3" /></svg>;
const BarsIcon = () => <svg width="13" height="10" stroke="currentColor" strokeWidth=".9"><path d="M1.500 2v8M4.500 0v10M7.500 4v6M11.500 2v8" /></svg>;
const FieldIcon = () => <svg width="13" height="9" fill="none" stroke="currentColor" strokeWidth=".9"><path d="M.8 8a5.700 5.700 0 0 1 11.400 0zM6.500 8L3.500 3.500M6.500 8l3-4.500M3.500 3.500h6" /></svg>;
const PeaksIcon = () => <svg width="13" height="10" fill="none" stroke="currentColor" strokeWidth=".9"><path d="M.5 8.500l2-3 1.500 2L6.500 1l2 6.500L10.500 4l2 4.500" /></svg>;
const WavesIcon = () => <svg width="13" height="12" fill="none" stroke="currentColor" strokeWidth=".9"><path d="M.5 4h3l1.500-1.500L6.500 1 8 2.500 9.500 4h3M.5 7.500h2L4 6l2.500-2L9 6l1.500 1.500h2M.5 11l3-1 3-2.500 3 2.500 3 1" /></svg>;

const InsightApp = () => (
  <InsightWindow>
    <InsightTitle>
      <Lights $gap={3.500}><Light $s={6} $c="#3b3a38" /><Light $s={6} $c="#3b3a38" /><Light $s={6} $c="#3b3a38" /></Lights>
      <TitleText $pl={23}>Insight 2/Main</TitleText><span />
    </InsightTitle>
    <InsightHead>
      <Logo>
        <svg width="24" height="24" viewBox="-12 -12 24 24" fill="none" stroke="#eefbe9">
          <circle r="7.800" strokeWidth="4.500" strokeDasharray="1.300 .75" /><circle r="10.200" strokeWidth=".8" /><circle r="3.500" strokeWidth="2.500" strokeDasharray=".5 .6" strokeOpacity=".4" />
        </svg>
      </Logo>
      <Brand>Insight</Brand>
      <Pill $mr={23}>
        <PillPart $w={154} $start><List size={9} strokeWidth={1.800} />Layouts</PillPart>
        <PillPart $w={20} $line><svg width="8" height="8"><path d="M8 .5v7L.5 4z" fill="#e3e7e9" /></svg></PillPart>
        <PillPart $w={19} $line><svg width="8" height="8"><path d="M0 .5v7L7.500 4z" fill="#e3e7e9" /></svg></PillPart>
      </Pill>
      <Pill $mr={7}>
        <PillPart $w={20}><svg width="13" height="13" fill="none" stroke="#d0d5d7"><path d="M8.500 11.500A5.500 5.500 0 1 0 4.500 11.500" /><circle cx="6.500" cy="11.800" r="1" fill="#fff" /></svg></PillPart>
        <PillPart $w={19} $line><svg width="7" height="9"><path d="M1.500 .5v8M5.500 .5v8" stroke="#e3e7e9" strokeWidth="1.800" /></svg></PillPart>
        <PillPart $w={20} $line><svg width="13" height="13" fill="none" stroke="#d0d5d7"><path d="M1.200 4.800a5.600 5.600 0 0 1 10.600 0M11.800 8.200a5.600 5.600 0 0 1-10.600 0" /><path d="M4 6v2M5.700 4.500v4M7.400 5.500v2.500M9 4.500v3.500" strokeWidth=".8" /><path d="M0 5.500h3L1.500 7.800zM10 7.500h3L11.500 5.200z" fill="#d0d5d7" stroke="none" /></svg></PillPart>
      </Pill>
      <Pill $mr={4}>
        <PillPart $w={21}><Gear size={13} color="#c6cccf" /></PillPart>
        <PillPart $w={18} $line $fs={13}>?</PillPart>
      </Pill>
      <svg width="17" height="17" fill="none" stroke="#687178" strokeWidth=".8"><path d="M1 9l3-1 4-5-1 9 7-9-2 10 4-5-5 2-7 5 6-13M3 11l10-5" /></svg>
    </InsightHead>
    <Tabs>
      <Tab $first><SpeakerIcon />Loudness</Tab>
      <Tab><BarsIcon />Levels</Tab>
      <Tab><FieldIcon />Sound Field</Tab>
      <Tab><HistoryIcon size={13} strokeWidth={1.400} />History</Tab>
      <Tab $off><Ear size={13} strokeWidth={1.700} />Intelligibility</Tab>
      <Tab><PeaksIcon />Spectrum</Tab>
      <Tab><WavesIcon />Spectrogram</Tab>
    </Tabs>
    <Panels>
      <Column $w={285}>
        <Panel $h={132}>
          <PanelHead><Gear /><PanelTitle>Loudness</PanelTitle><EndSlot><Expand /></EndSlot></PanelHead>
          <Readouts>
            <Readout $w={86}><ReadLabel $w={71}>Short Term</ReadLabel><ReadValue><Big $s={22} $c="#e3b73c" $ls={1}>−14.5</Big><Unit>LUFS</Unit></ReadValue></Readout>
            <Readout $w={109}><ReadLabel $w={89}>Integrated</ReadLabel><ReadValue><Big $s={30} $c="#d8123e" $ls={1.500} $bold>-11.6</Big><Unit>LUFS</Unit></ReadValue></Readout>
            <Readout $w={80}><ReadLabel $w={59}>Momentary</ReadLabel><ReadValue><Big $s={22} $c="#e3b73c" $ls={0.900}>−4.6</Big><Unit $ml={7}>{"Max\nLUFS"}</Unit></ReadValue></Readout>
          </Readouts>
          <SubRead>
            <SubLabel $w={33}>LRA</SubLabel><SubValue $w={27}>10.3</SubValue><Unit $w={44}>LU</Unit>
            <SubLabel $w={44}>True Peak</SubLabel><SubValue $w={31}>−1.0</SubValue><Unit>dB</Unit>
          </SubRead>
          <TargetRow>
            <Targets><TargetIcon><SlidersVertical size={9} strokeWidth={2.200} /></TargetIcon><TargetText>Targets</TargetText><TargetCaret><ChevronDown size={9} color="#6d7476" /></TargetCaret></Targets>
          </TargetRow>
        </Panel>
        <Panel $h={133}>
          <PanelHead><Gear /><PanelTitle>Levels</PanelTitle><EndSlot><Expand /></EndSlot></PanelHead>
          <LevelBody>
            <ScaleCol $w={34} $a="right">
              <ScaleItem $h={11} $c="#c9cdce">Peak</ScaleItem><ScaleItem $h={8}>RMS</ScaleItem><ScaleItem $h={11}>0</ScaleItem>
              <ScaleItem $h={16}>−10</ScaleItem><ScaleItem $h={14}>−20</ScaleItem><ScaleItem $h={15} $mt={11}>−40</ScaleItem><ScaleItem $h={14}>−Inf</ScaleItem>
            </ScaleCol>
            <BarCol $mr={35}><ScaleItem $h={11} $c="#c9cdce">−1.0</ScaleItem><ScaleItem $h={9} $c="#8b9092">−10.9</ScaleItem><LevelBar /><ScaleItem $h={21} $c="#4d5456" $fs={8.500}>L</ScaleItem></BarCol>
            <BarCol $mr={0}><ScaleItem $h={11} $c="#c9cdce">−1.0</ScaleItem><ScaleItem $h={9} $c="#8b9092">−11.0</ScaleItem><LevelBar /><ScaleItem $h={21} $c="#4d5456" $fs={8.500}>R</ScaleItem></BarCol>
            <ScaleCol $w={34} $a="left">
              <ScaleItem $h={11} $mt={19}>0</ScaleItem>
              <ScaleItem $h={16}>−10</ScaleItem><ScaleItem $h={14}>−20</ScaleItem><ScaleItem $h={15} $mt={11}>−40</ScaleItem><ScaleItem $h={14}>−Inf</ScaleItem>
            </ScaleCol>
          </LevelBody>
        </Panel>
        <Panel $h={177}>
          <PanelHead><Gear /><PanelTitle>Sound Field</PanelTitle><EndSlot><Expand /></EndSlot></PanelHead>
          <SoundFieldArt />
          <Segments $ml={33}><Segment $w={73} $first $on>Polar Sample</Segment><Segment $w={72}>Polar Level</Segment><Segment $w={72} $last>Lissajous</Segment></Segments>
        </Panel>
      </Column>
      <Column $w={281}>
        <Panel $h={269}>
          <PanelHead $line><Gear /><PanelTitle>Spectrum</PanelTitle><span /></PanelHead>
          <SpectrumArt />
        </Panel>
        <Panel $h={180}>
          <PanelHead>
            <StartSlot><Gear /><SourceSelect>Select a source<ChevronDown size={9} /></SourceSelect></StartSlot>
            <PanelTitle>Spectrogram</PanelTitle><span />
          </PanelHead>
          <SpectrogramArt />
          <Segments $ml={11}>
            <Segment $w={52} $first>Front High</Segment><Segment $w={51.700}>Front Low</Segment><Segment $w={51.700}>Diagonal</Segment><Segment $w={51.700}>Side Low</Segment><Segment $w={54}>Side High</Segment>
          </Segments>
        </Panel>
      </Column>
    </Panels>
    <HistoryPanel $h={155}>
      <PanelHead $line><Gear /><PanelTitle>History</PanelTitle><span /></PanelHead>
      <HistoryArt />
    </HistoryPanel>
  </InsightWindow>
);

/* ---------- menu bar ---------- */
const menus = [["File", 14.5], ["Edit", 15], ["Create", 26.5], ["Playback", 35], ["View", 19.5], ["Navigate", 34.5], ["Options", 31], ["Help", 19]];
const TopBar = () => (
  <MenuBar>
    <AppleSlot>
      <svg width="10" height="11" viewBox="0 0 17 20" fill="#f4f2ea"><path d="M14 10.600c0-2.200 1.800-3.300 1.900-3.400-1-1.500-2.600-1.700-3.200-1.700-1.400-.1-2.600.8-3.300.8s-1.700-.8-2.900-.8C5 5.500 3.700 6.400 2.900 7.700c-1.600 2.700-.4 6.800 1.100 9 .8 1.100 1.600 2.300 2.800 2.200 1.100 0 1.500-.7 2.900-.7s1.700.7 2.900.7 2-1.100 2.700-2.200c.9-1.200 1.200-2.400 1.200-2.500-.1 0-2.500-.9-2.500-3.600zM11.800 4c.6-.8 1-1.800.9-2.900-.9 0-2 .6-2.600 1.300-.6.7-1.100 1.700-.9 2.800 1 .1 2-.5 2.600-1.200z" /></svg>
    </AppleSlot>
    <MenuItem $w={17} $bold>Live</MenuItem>
    {menus.map(([m, w]) => <MenuItem key={m} $w={w}>{m}</MenuItem>)}
    <Recorder>iShowU<br />00:01:21</Recorder>
    <GreenDot />
    <StatusSlot $w={26}><svg width="12" height="12" fill="none" stroke="#d6d3c6" strokeWidth="1.200"><rect x="1.500" y="1" width="9.500" height="9.500" rx="2" /><path d="M4 3.300h3.500a1 1 0 0 1 0 2.200H4M7 5.500l2 3M0 8.500v3.500l3-2z" /></svg></StatusSlot>
    <StatusSlot $w={26}><ShareBadge><svg width="13" height="10" fill="none" stroke="#fff"><path d="M11.500 4V1.500a1 1 0 0 0-1-1h-9a1 1 0 0 0-1 1v5a1 1 0 0 0 1 1H7" /><circle cx="10.500" cy="5.800" r="1.300" fill="#fff" stroke="none" /><path d="M8 9.500a2.500 2 0 0 1 5 0z" fill="#fff" stroke="none" /></svg></ShareBadge></StatusSlot>
    <StatusSlot $w={24}><svg width="14" height="13"><path d="M4 1l2.500 1.500L4 4 1.500 2.500zM10 1l2.500 1.500L10 4 7.500 2.500zM10 5l2.500 1.500L10 8 7.500 6.500zM8 8.500L10.500 10 8 11.500z" fill="#f4f2ea" /><circle cx="5" cy="8.500" r="4" fill="#d8163c" /><path d="M4.300 7.500l1-.7v3.700" stroke="#fff" fill="none" strokeWidth=".8" /></svg></StatusSlot>
    <StatusSlot $w={24}><svg width="13" height="12"><path d="M1 2.500h5L8 5l1-1 1.500.5L7 11.500H5.500z" fill="#f4f2ea" /><path d="M4 4.500l2.500 4" stroke="#4f4b3a" /><circle cx="9.500" cy="3" r="2.700" fill="#f4f2ea" /><path d="M8.300 3l1 1 1.500-1.800" stroke="#4f4b3a" fill="none" strokeWidth=".8" /></svg></StatusSlot>
    <StatusSlot $w={23}><svg width="10" height="11" fill="none" stroke="#f4f2ea"><path d="M5 .8l4 2.400-4 2.400-4-2.400zM1 3.200v2.200l4 2.400 4-2.400V3.200M1.500 7L1 7.600 5 10l4-2.400-.5-.6" /></svg></StatusSlot>
    <StatusSlot $w={21}><CirclePlay size={11} /></StatusSlot>
    <StatusSlot $w={24}><svg width="10" height="10"><path d="M4 .5A5 5 0 1 0 9.500 6.500 4.500 4.500 0 0 1 4 .5z" fill="#f4f2ea" /></svg></StatusSlot>
    <StatusSlot $w={25}><Wifi size={13} strokeWidth={3} /></StatusSlot>
    <StatusSlot $w={25}><Monitor size={12} /></StatusSlot>
    <StatusSlot $w={25}>100%</StatusSlot>
    <StatusSlot $w={18}><svg width="16" height="8"><rect x="0" y=".5" width="13.500" height="7" rx="2" fill="#d9d6ca" /><path d="M14.300 2.800v2.400q1-.4 1-1.200t-1-1.200z" fill="#d9d6ca" /><path d="M7.500 1L4.500 4.500h2L6 7l3.200-3.600H7z" fill="#3f3c2e" /></svg></StatusSlot>
    <StatusSlot $w={31}><Volume2 size={13} fill="#f4f2ea" /></StatusSlot>
    <StatusSlot $w={16}><Bluetooth size={11} strokeWidth={2.200} /></StatusSlot>
    <StatusSlot $w={28}><svg width="13" height="6" fill="#f4f2ea"><path d="M3.500 1h1v1h-1zM8 1h1v1H8zM1 4h1v1H1zM3 4h6v1H3zM11 4h1v1h-1zM6 0h1v1H6z" /></svg></StatusSlot>
    <StatusSlot $w={19}><svg width="13" height="11" fill="none" stroke="#f4f2ea" strokeWidth="1.100"><rect x="3.500" y="3.500" width="8.500" height="6.500" rx="1" /><path d="M3.500 8H2a1 1 0 0 1-1-1V2a1 1 0 0 1 1-1h6.500a1 1 0 0 1 1 1v1.500" /></svg></StatusSlot>
    <StatusSlot $w={18}><svg width="10" height="10" fill="none" stroke="#f4f2ea" strokeWidth="1.200"><rect x=".7" y=".7" width="8" height="3.200" rx="1.600" fill="#f4f2ea" /><rect x=".7" y="6" width="8" height="3.200" rx="1.600" /><circle cx="7" cy="7.600" r="1" fill="#f4f2ea" /></svg></StatusSlot>
    <OrangeDot />
    <ClockText>Mon Jan 26&nbsp; 10:21 PM</ClockText>
  </MenuBar>
);

export default function App() {
  return (
    <>
      <GlobalStyle />
      <Desktop>
        <TopBar />
        <Windows>
          <LiveApp />
          <InsightApp />
        </Windows>
      </Desktop>
    </>
  );
}
